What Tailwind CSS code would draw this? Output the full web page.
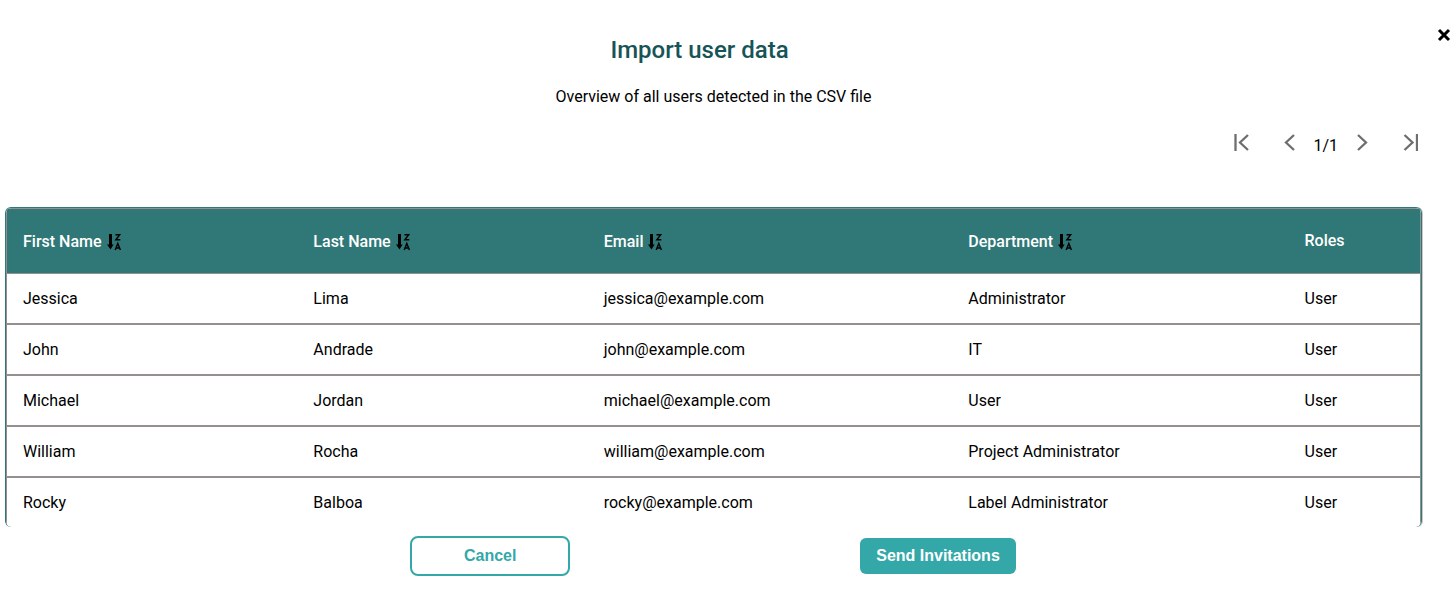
<!DOCTYPE html>
<html lang="en">
<head>
<meta charset="utf-8">
<meta name="viewport" content="width=device-width, initial-scale=1">
<title>Import user data</title>
<script src="https://cdn.jsdelivr.net/npm/@tailwindcss/browser@4"></script>
</head>
<body class="bg-white text-black font-[Roboto,sans-serif] text-base">
<svg class="hidden" aria-hidden="true">
  <symbol id="sort" viewBox="0 0 16 18">
    <path d="M3 1h3v10.500h1.600L4.500 16.500l-3.500-5h2z"/>
    <path d="M9.500 1.700h4.200l-3.900 5h4.500M9.200 17l2.600-6.500 2.600 6.500M10 15h3.600" fill="none" stroke="currentColor" stroke-width="1.400"/>
  </symbol>
</svg>
<main class="relative pt-8">
  <button aria-label="Close" class="absolute right-1 top-7">
    <svg class="size-4" viewBox="0 0 16 16" fill="none" stroke="currentColor" stroke-width="3"><path d="M3 2l10 10M13 2L3 12"/></svg>
  </button>
  <div class="mr-[34px] ml-[5px]">
    <header class="text-center">
      <h1 class="pr-7 text-2xl leading-9 font-medium text-[#175457]">Import user data</h1>
      <p class="mt-4 leading-[26px]">Overview of all users detected in the CSV file</p>
    </header>
    <nav aria-label="Pagination" class="mt-4 mr-1 flex items-center justify-end text-[#6e6e6e]">
      <button aria-label="First page"><svg class="h-[18px] w-4" viewBox="0 0 16 18" fill="none" stroke="currentColor" stroke-width="2.300"><path d="M2.500 1v17M15 2L7 9.500l8 7.500"/></svg></button>
      <button aria-label="Previous page" class="ml-[34px]"><svg class="h-[18px] w-3" viewBox="0 0 12 18" fill="none" stroke="currentColor" stroke-width="2.300"><path d="M11 2L3 9.500l8 7.500"/></svg></button>
      <span class="mx-[18px] pt-2 text-black">1/1</span>
      <button aria-label="Next page"><svg class="h-[18px] w-3" viewBox="0 0 12 18" fill="none" stroke="currentColor" stroke-width="2.300"><path d="M2 2l8 7.500-8 7.500"/></svg></button>
      <button aria-label="Last page" class="ml-[34px]"><svg class="h-[18px] w-4" viewBox="0 0 16 18" fill="none" stroke="currentColor" stroke-width="2.300"><path d="M2.500 2l8 7.500-8 7.500M15 1v17"/></svg></button>
    </nav>
    <div class="mt-[49px] overflow-hidden rounded-md border border-b-0 border-[#307777] shadow-[1px_0_0_#c4caca]">
      <table class="w-full table-fixed border-separate border-spacing-0 border-x border-t border-[#949090] text-left">
        <colgroup><col class="w-[20.550%]"><col class="w-[20.550%]"><col class="w-[25.800%]"><col class="w-[23.800%]"><col></colgroup>
        <thead class="bg-[#307777] text-white">
          <tr class="[&>th]:h-16 [&>th]:px-4 [&>th]:font-medium">
            <th scope="col"><div class="flex items-center gap-1 pt-0.5">First Name <button aria-label="Sort by first name" class="text-black"><svg class="h-[18px] w-4" fill="currentColor"><use href="#sort"/></svg></button></div></th>
            <th scope="col"><div class="flex items-center gap-1 pt-0.5">Last Name <button aria-label="Sort by last name" class="text-black"><svg class="h-[18px] w-4" fill="currentColor"><use href="#sort"/></svg></button></div></th>
            <th scope="col"><div class="flex items-center gap-1 pt-0.5">Email <button aria-label="Sort by email" class="text-black"><svg class="h-[18px] w-4" fill="currentColor"><use href="#sort"/></svg></button></div></th>
            <th scope="col"><div class="flex items-center gap-1 pt-0.5">Department <button aria-label="Sort by department" class="text-black"><svg class="h-[18px] w-4" fill="currentColor"><use href="#sort"/></svg></button></div></th>
            <th scope="col">Roles</th>
          </tr>
        </thead>
        <tbody class="[&_td]:h-[51px] [&_td]:border-t-2 [&_td]:border-[#949090] [&_td]:px-4 [&>tr:first-child>td]:h-[50px] [&>tr:first-child>td]:border-t">
          <tr><td>Jessica</td><td>Lima</td><td>jessica@example.com</td><td>Administrator</td><td>User</td></tr>
          <tr><td>John</td><td>Andrade</td><td>john@example.com</td><td>IT</td><td>User</td></tr>
          <tr><td>Michael</td><td>Jordan</td><td>michael@example.com</td><td>User</td><td>User</td></tr>
          <tr><td>William</td><td>Rocha</td><td>william@example.com</td><td>Project Administrator</td><td>User</td></tr>
          <tr><td>Rocky</td><td>Balboa</td><td>rocky@example.com</td><td>Label Administrator</td><td>User</td></tr>
        </tbody>
      </table>
    </div>
    <div class="mt-[9px] flex items-center justify-center gap-[290px] pr-px font-['Liberation_Sans',Arial,sans-serif] font-bold">
      <button class="h-10 w-40 rounded-lg border-2 border-[#34a8a9] text-[#34a8a9]">Cancel</button>
      <button class="h-9 rounded-md bg-[#34a8a9] px-4 text-white">Send Invitations</button>
    </div>
  </div>
</main>
</body>
</html>
